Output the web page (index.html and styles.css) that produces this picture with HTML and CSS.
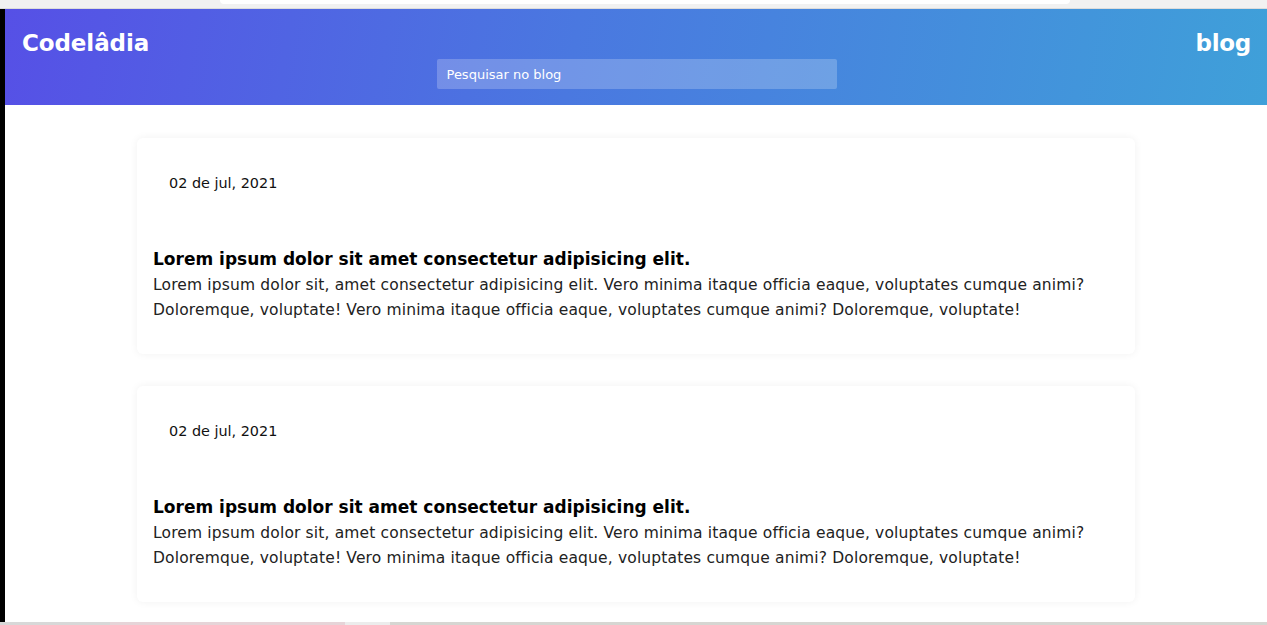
FILE: index.html
```html
<!DOCTYPE html>
<html lang="pt-BR">
<head>
<meta charset="utf-8">
<title>Codelâdia blog</title>
<link rel="stylesheet" href="styles.css">
</head>
<body>
<div class="chrome-top"><div class="chrome-tab"></div></div>
<div class="window">
  <div class="edge"></div>
  <div class="page">
    <header class="header">
      <h1 class="logo">Codelâdia</h1>
      <input class="search" type="text" placeholder="Pesquisar no blog">
      <span class="section">blog</span>
    </header>
    <main class="posts">
      <article class="card">
        <time class="date">02 de jul, 2021</time>
        <h2 class="title">Lorem ipsum dolor sit amet consectetur adipisicing elit.</h2>
        <p class="excerpt">Lorem ipsum dolor sit, amet consectetur adipisicing elit. Vero minima itaque officia eaque, voluptates cumque animi? Doloremque, voluptate! Vero minima itaque officia eaque, voluptates cumque animi? Doloremque, voluptate!</p>
      </article>
      <article class="card">
        <time class="date">02 de jul, 2021</time>
        <h2 class="title">Lorem ipsum dolor sit amet consectetur adipisicing elit.</h2>
        <p class="excerpt">Lorem ipsum dolor sit, amet consectetur adipisicing elit. Vero minima itaque officia eaque, voluptates cumque animi? Doloremque, voluptate! Vero minima itaque officia eaque, voluptates cumque animi? Doloremque, voluptate!</p>
      </article>
    </main>
  </div>
</div>
<div class="chrome-bottom"></div>
</body>
</html>
```
FILE: styles.css
```css
* { box-sizing: border-box; }
html, body { margin: 0; height: 100%; }
body {
  font-family: "DejaVu Sans", sans-serif;
  background: #fff;
  color: #111;
  display: flex;
  flex-direction: column;
  overflow: hidden;
}
.chrome-top {
  height: 9px;
  background: #f1f1f1;
  border-bottom: 1px solid #dcdcdc;
  flex: none;
  padding-left: 220px;
}
.chrome-tab {
  width: 850px;
  height: 4px;
  background: #fff;
  border-radius: 0 0 4px 4px;
}
.window {
  flex: 1;
  display: flex;
  min-height: 0;
}
.edge {
  width: 5px;
  background: #000;
  flex: none;
}
.page {
  flex: 1;
  display: flex;
  flex-direction: column;
}
.header {
  height: 96px;
  padding: 16px 16px 16px 17px;
  display: grid;
  grid-template-columns: 1fr 400px 1fr;
  background: linear-gradient(100deg, #5650e6 0%, #4a78e0 45%, #3fa0d9 100%);
  color: #fff;
}
.logo {
  margin: 0;
  font-size: 23px;
  font-weight: 700;
  line-height: 36px;
  justify-self: start;
  letter-spacing: -0.1px;
}
.section {
  font-size: 23px;
  font-weight: 700;
  line-height: 36px;
  justify-self: end;
  letter-spacing: -0.3px;
}
.search {
  align-self: end;
  height: 30px;
  width: 400px;
  border: none;
  border-radius: 2px;
  background: rgba(255,255,255,0.22);
  padding: 0 10px;
  font-family: inherit;
  font-size: 13px;
  color: #fff;
  outline: none;
}
.search::placeholder { color: #fff; opacity: 1; }
.posts {
  padding-top: 33px;
  display: flex;
  flex-direction: column;
  align-items: center;
  gap: 32px;
}
.card {
  width: 998px;
  height: 216px;
  background: #fff;
  border-radius: 6px;
  box-shadow: 0 0 8px rgba(0,0,0,0.06);
  padding: 16px;
  display: flex;
  flex-direction: column;
}
.date {
  display: block;
  padding: 18px 16px 0;
  font-size: 14.4px;
  line-height: 22px;
  color: #111;
}
.title {
  margin: 53px 0 0;
  font-size: 17px;
  font-weight: 700;
  line-height: 24px;
  color: #000;
}
.excerpt {
  margin: 2px 0 0;
  font-size: 15.5px;
  line-height: 25px;
  letter-spacing: 0.15px;
  color: #222;
}
.chrome-bottom {
  height: 3px;
  flex: none;
  background: linear-gradient(90deg, #d8d8d8 0 110px, #e6d4d8 110px 345px, #ececec 345px 390px, #d6d6d2 390px);
}
```
